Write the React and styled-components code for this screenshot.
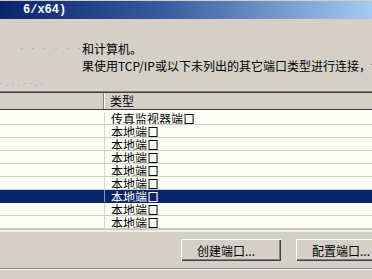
import React from "react";
import styled, { createGlobalStyle } from "styled-components";

const Global = createGlobalStyle`
  html, body { margin: 0; padding: 0; background: #d4d0c8; }
  body { font-family: "Noto Sans CJK SC", "Liberation Sans", sans-serif; }
`;

const Window = styled.div`
  width: 372px;
  height: 279px;
  overflow: hidden;
  background: #d4d0c8;
  display: flex;
  flex-direction: column;
  font-size: 12px;
  color: #000;
`;

const TitleBar = styled.div`
  height: 18px;
  margin-top: 1px;
  flex: none;
  background: linear-gradient(to right, #0a246a 0%, #3a5da0 45%, #a6caf0 100%);
  color: #fff;
  font-family: "Liberation Mono", monospace;
  font-weight: bold;
  font-size: 12px;
  line-height: 18px;
  padding-left: 23px;
  white-space: nowrap;
`;

const Intro = styled.div`
  padding-top: 21px;
  display: flex;
  flex-direction: column;
  line-height: 17px;
  white-space: nowrap;
  flex: none;
`;

const Line = styled.div`
  display: flex;
  align-items: center;
  padding-left: ${(p) => p.$indent}px;
  height: 17px;
`;

const Faint = styled.span`
  width: ${(p) => p.$w}px;
  flex: none;
  color: #9a9890;
  font-size: 9px;
  letter-spacing: 3px;
  overflow: hidden;
  font-family: "Liberation Sans", sans-serif;
`;

const FaintRow = styled.div`
  height: 17px;
  display: flex;
  align-items: center;
  flex: none;
`;

const ListView = styled.div`
  margin-top: 0px;
  border-top: 1px solid #808080;
  flex: none;
  display: flex;
  flex-direction: column;
  background: #fffffa;
`;

const Header = styled.div`
  display: grid;
  grid-template-columns: 104px 1fr;
  height: 16px;
  background: #d4d0c8;
  border-top: 1px solid #404040;
  border-bottom: 1px solid #404040;
  line-height: 16px;
`;

const HeadCell = styled.div`
  padding-left: ${(p) => (p.$first ? 4 : 5)}px;
  border-right: ${(p) => (p.$first ? "1px solid #808080" : "none")};
  border-left: ${(p) => (p.$first ? "none" : "1px solid #fff")};
  box-sizing: border-box;
`;

const Rows = styled.div`
  padding-top: 2px;
  display: flex;
  flex-direction: column;
`;

const Row = styled.div`
  display: grid;
  grid-template-columns: 104px 1fr;
  height: 13px;
  line-height: 13px;
  box-sizing: border-box;
  border-bottom: 1px solid ${(p) => (p.$selected ? "#0a246a" : "#cfcfca")};
  background: ${(p) => (p.$selected ? "#0a246a" : "transparent")};
  color: ${(p) => (p.$selected ? "#fff" : "#000")};
`;

const Cell = styled.div`
  padding-left: 6px;
  border-left: ${(p) => (p.$divider ? `1px solid ${p.$selected ? "#8a95b8" : "#d8d8d2"}` : "none")};
  white-space: nowrap;
  overflow: hidden;
`;

const ListBottom = styled.div`
  height: 2px;
  background: #f0efea;
  border-top: 1px solid #c8c6c0;
`;

const ButtonBar = styled.div`
  display: flex;
  gap: 15px;
  padding-left: 181px;
  padding-top: 7px;
  flex: none;
`;

const Button = styled.button`
  flex: none;
  width: 100px;
  height: 22px;
  box-sizing: border-box;
  background: #d4d0c8;
  font-family: "Noto Sans CJK SC", "Liberation Sans", sans-serif;
  font-size: 12px;
  color: #000;
  padding: 0 0 0 ${(p) => p.$pad}px;
  text-align: left;
  border: none;
  box-shadow: inset 1px 1px 0 #ffffff, inset -1px -1px 0 #404040, inset -2px -2px 0 #808080;
  white-space: nowrap;
`;

const Separator = styled.div`
  margin-top: 7px;
  border-top: 1px solid #808080;
  border-bottom: 1px solid #ffffff;
  flex: none;
`;

const rows = [
  "传真监视器端口",
  "本地端口",
  "本地端口",
  "本地端口",
  "本地端口",
  "本地端口",
  "本地端口",
  "本地端口",
  "本地端口",
];

export default function App() {
  return (
    <>
      <Global />
      <Window>
        <TitleBar>6/x64)</TitleBar>
        <Intro>
          <Line $indent={20}>
            <Faint $w={62}>· · · · ·  · ·</Faint>
            <span>和计算机。</span>
          </Line>
          <Line $indent={82}>果使用TCP/IP或以下未列出的其它端口类型进行连接，请</Line>
        </Intro>
        <FaintRow>
          <Faint $w={56}>·.·.··.·</Faint>
        </FaintRow>
        <ListView>
          <Header>
            <HeadCell $first />
            <HeadCell>类型</HeadCell>
          </Header>
          <Rows>
            {rows.map((r, i) => (
              <Row key={i} $selected={i === 6}>
                <Cell />
                <Cell $divider $selected={i === 6}>{r}</Cell>
              </Row>
            ))}
          </Rows>
          <ListBottom />
        </ListView>
        <ButtonBar>
          <Button $pad={16}>创建端口...</Button>
          <Button $pad={16}>配置端口...</Button>
        </ButtonBar>
        <Separator />
      </Window>
    </>
  );
}
